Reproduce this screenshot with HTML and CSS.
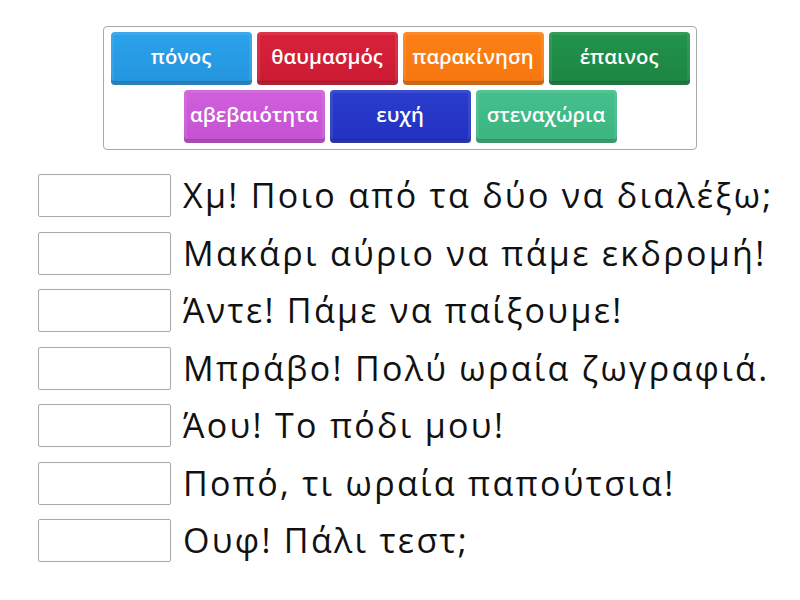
FILE: index.html
```html
<!DOCTYPE html>
<html lang="el">
<head>
<meta charset="utf-8">
<link rel="stylesheet" href="styles.css">
</head>
<body>
<div class="page">
  <div class="bank">
    <div class="tile blue">πόνος</div>
    <div class="tile red">θαυμασμός</div>
    <div class="tile orange">παρακίνηση</div>
    <div class="tile green">έπαινος</div>
    <div class="tile purple">αβεβαιότητα</div>
    <div class="tile navy">ευχή</div>
    <div class="tile teal">στεναχώρια</div>
  </div>
  <div class="rows">
    <div class="row"><div class="slot"></div><div class="text">Χμ! Ποιο από τα δύο να διαλέξω;</div></div>
    <div class="row"><div class="slot"></div><div class="text">Μακάρι αύριο να πάμε εκδρομή!</div></div>
    <div class="row"><div class="slot"></div><div class="text">Άντε! Πάμε να παίξουμε!</div></div>
    <div class="row"><div class="slot"></div><div class="text">Μπράβο! Πολύ ωραία ζωγραφιά.</div></div>
    <div class="row"><div class="slot"></div><div class="text">Άου! Το πόδι μου!</div></div>
    <div class="row"><div class="slot"></div><div class="text">Ποπό, τι ωραία παπούτσια!</div></div>
    <div class="row"><div class="slot"></div><div class="text">Ουφ! Πάλι τεστ;</div></div>
  </div>
</div>
</body>
</html>
```
FILE: styles.css
```css
html, body {
  margin: 0;
  padding: 0;
  background: #fff;
}
body {
  font-family: "Open Sans", "Noto Sans", sans-serif;
  color: #111;
}
.page {
  width: 800px;
  height: 600px;
  display: flex;
  flex-direction: column;
  align-items: flex-start;
}
.bank {
  margin: 26px 0 0 103px;
  width: 580px;
  padding: 5px 6px 6px 6px;
  border: 1px solid #a8a8a8;
  border-radius: 4px;
  display: flex;
  flex-wrap: wrap;
  justify-content: center;
  gap: 5px;
}
.tile {
  width: 141px;
  height: 53px;
  box-sizing: border-box;
  border-radius: 4px;
  display: flex;
  align-items: center;
  justify-content: center;
  color: #fff;
  font-family: "Open Sans", "Noto Sans", sans-serif;
  font-weight: 600;
  font-size: 20.3px;
  padding-bottom: 5px;
  box-shadow: inset 0 -4px 0 rgba(0,0,0,0.18), inset 0 0 0 3px rgba(255,255,255,0.08);
}
.blue { background: linear-gradient(#2ba2ea, #2395de); }
.red { background: linear-gradient(#d8223b, #cc1a33); }
.orange { background: linear-gradient(#fd8116, #f5760e); }
.green { background: linear-gradient(#22934b, #1c8542); }
.purple { background: linear-gradient(#cf60db, #c651d3); }
.navy { background: linear-gradient(#2a3dcc, #2231c2); }
.teal { background: linear-gradient(#45c08c, #3bb47f); }

.rows {
  margin: 24px 0 0 38px;
  display: flex;
  flex-direction: column;
  gap: 14.5px;
}
.row {
  display: flex;
  align-items: center;
  height: 43px;
  gap: 12px;
}
.slot {
  width: 133px;
  height: 43px;
  box-sizing: border-box;
  border: 1px solid #a9a9a9;
  border-radius: 2px;
  background: #fff;
}
.text {
  font-size: 34px;
  font-weight: 400;
  letter-spacing: 2.3px;
  line-height: 43px;
  white-space: nowrap;
  color: #111;
}
```
